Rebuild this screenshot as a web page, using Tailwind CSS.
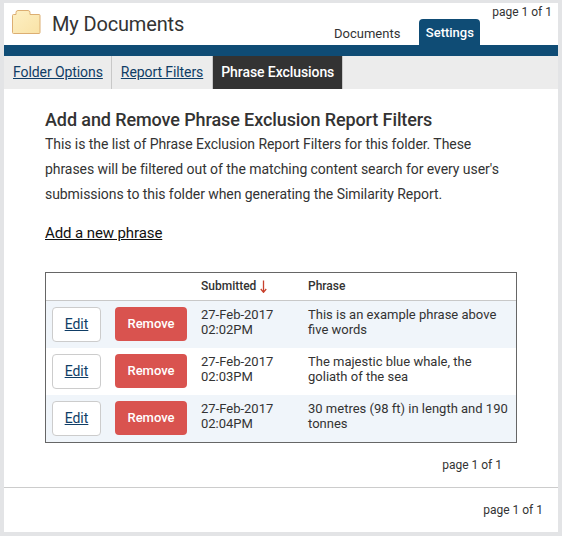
<!DOCTYPE html>
<html lang="en">
<head>
  <meta charset="UTF-8">
  <title>Phrase Exclusions</title>
  <script src="https://cdn.jsdelivr.net/npm/@tailwindcss/browser@4"></script>
</head>
<body class="h-[536px] overflow-hidden bg-[#e3e4e6] px-1 pt-[3px] font-['Roboto',sans-serif] text-[#333]">
  <div class="h-[529px] w-[554px] bg-white">
    <!-- header -->
    <div class="relative flex h-[42px] items-start">
      <svg class="ml-2 mt-[7px] h-6 w-[29px]" viewBox="0 0 29 24">
        <defs>
          <linearGradient id="folder" x1="0" y1="0" x2="1" y2="1">
            <stop offset="0" stop-color="#fdf0c4"/>
            <stop offset="1" stop-color="#f9e2a6"/>
          </linearGradient>
        </defs>
        <path d="M0.500 5.500 Q0.500 4.500 1.500 4.500 H4 V2.500 Q4 0.500 6 0.500 H16 Q18 0.500 18 2.500 V4.500 H27 Q28 4.500 28 5.500 V22.500 Q28 23.500 27 23.500 H1.500 Q0.500 23.500 0.500 22.500 Z" fill="url(#folder)" stroke="#dcae72"/>
      </svg>
      <h1 class="ml-[11px] mt-[9px] text-[20px] leading-6 font-normal tracking-[-0.15px]">My Documents</h1>
      <div class="absolute top-[16px] left-[319px] flex">
        <a class="px-[11px] pt-[7px] text-[13px] leading-4">Documents</a>
        <a class="ml-[8px] h-[26px] w-[61px] rounded-t-[4px] bg-[#0f4c75] pt-[6px] text-center text-[13px] leading-4 font-medium text-white">Settings</a>
      </div>
      <span class="absolute top-[1px] right-[6px] text-[12px] leading-4">page 1 of 1</span>
    </div>
    <div class="h-[11px] bg-[#0f4c75]"></div>

    <!-- sub navigation -->
    <div class="flex h-[33px] bg-[#ececec] text-[14px] leading-[33px] tracking-[-0.08px]">
      <a class="border-r border-[#c8c8c8] pl-[9px] pr-[8px] text-[#0f3d66] underline">Folder Options</a>
      <a class="border-r border-[#c8c8c8] px-[9px] text-[#0f3d66] underline">Report Filters</a>
      <a class="border-r border-[#c8c8c8] bg-[#333] px-[8px] font-medium text-white">Phrase Exclusions</a>
    </div>

    <!-- content -->
    <div class="pl-[41px] pr-[41px]">
      <h2 class="mt-[21px] text-[18px] leading-5 font-medium tracking-[-0.1px]">Add and Remove Phrase Exclusion Report Filters</h2>
      <p class="mt-[2px] text-[14px] leading-[25px] tracking-[-0.06px]">This is the list of Phrase Exclusion Report Filters for this folder. These<br>phrases will be filtered out of the matching content search for every user's<br>submissions to this folder when generating the Similarity Report.</p>
      <a class="mt-[16px] block text-[15px] leading-5 tracking-[-0.1px] text-[#111] underline">Add a new phrase</a>

      <table class="mt-[29px] w-[472px] table-fixed border-separate border-spacing-0 border border-[#666] text-[13px] leading-[15px]">
        <thead>
          <tr class="text-[12px]">
            <th class="h-[28px] w-[155px] border-b border-[#c8c8c8]"></th>
            <th class="w-[107px] border-b border-[#c8c8c8] text-left font-medium">
              <span class="flex items-center gap-[4px]">Submitted
                <svg class="h-[13px] w-[7px]" viewBox="0 0 7 13"><path d="M3.500 0.500 V12 M0.800 9 L3.500 12.300 L6.200 9" fill="none" stroke="#c8402c" stroke-width="1.3"/></svg>
              </span>
            </th>
            <th class="border-b border-[#c8c8c8] text-left font-medium">Phrase</th>
          </tr>
        </thead>
        <tbody>
          <tr class="bg-[#f0f5fa]">
            <td class="h-[47px] pl-[6px]">
              <div class="flex gap-[14px]">
                <a class="flex h-[35px] w-[49px] items-center justify-center rounded-[4px] border border-[#ccc] bg-white text-[14px] text-[#0f3d66] underline">Edit</a>
                <a class="flex h-[34px] w-[72px] items-center justify-center rounded-[4px] bg-[#d9534f] pb-px text-[13px] font-medium text-white">Remove</a>
              </div>
            </td>
            <td class="pt-[6px] align-top">27-Feb-2017<br>02:02PM</td>
            <td class="pt-[6px] align-top">This is an example phrase above<br>five words</td>
          </tr>
          <tr class="bg-white">
            <td class="h-[47px] pl-[6px]">
              <div class="flex gap-[14px]">
                <a class="flex h-[35px] w-[49px] items-center justify-center rounded-[4px] border border-[#ccc] bg-white text-[14px] text-[#0f3d66] underline">Edit</a>
                <a class="flex h-[34px] w-[72px] items-center justify-center rounded-[4px] bg-[#d9534f] pb-px text-[13px] font-medium text-white">Remove</a>
              </div>
            </td>
            <td class="pt-[6px] align-top">27-Feb-2017<br>02:03PM</td>
            <td class="pt-[6px] align-top">The majestic blue whale, the<br>goliath of the sea</td>
          </tr>
          <tr class="bg-[#f0f5fa]">
            <td class="h-[47px] pl-[6px]">
              <div class="flex gap-[14px]">
                <a class="flex h-[35px] w-[49px] items-center justify-center rounded-[4px] border border-[#ccc] bg-white text-[14px] text-[#0f3d66] underline">Edit</a>
                <a class="flex h-[34px] w-[72px] items-center justify-center rounded-[4px] bg-[#d9534f] pb-px text-[13px] font-medium text-white">Remove</a>
              </div>
            </td>
            <td class="pt-[6px] align-top">27-Feb-2017<br>02:04PM</td>
            <td class="pt-[6px] align-top">30 metres (98 ft) in length and 190<br>tonnes</td>
          </tr>
        </tbody>
      </table>
      <div class="mt-[14px] pr-[15px] text-right text-[12px] leading-4">page 1 of 1</div>
    </div>

    <!-- footer -->
    <div class="mt-[14px] border-t border-[#ccc] pt-[14px] pr-[15px] text-right text-[12px] leading-4">page 1 of 1</div>
  </div>
</body>
</html>
